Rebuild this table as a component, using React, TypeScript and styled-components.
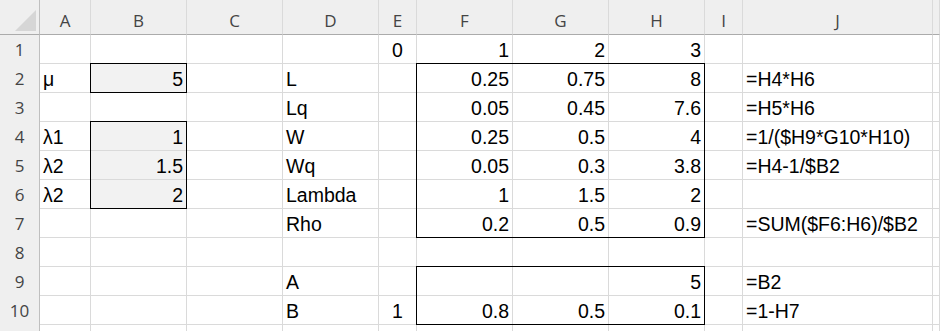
import styled, { createGlobalStyle } from 'styled-components';

type Value = string | number | null;
type Align = 'left' | 'right' | 'center';

interface CellProps {
  $align: Align;
  $fill?: boolean;
}

interface BoxProps {
  $cols: string;
  $rows: string;
}

const COL_WIDTHS = [40, 51, 96, 96, 96, 38, 96, 96, 96, 38, 190];
const TEMPLATE_COLS = `${COL_WIDTHS.map(w => `${w}px`).join(' ')} 1fr`;
const TEMPLATE_ROWS = '35px repeat(11, 29px)';
const LETTERS = ['A', 'B', 'C', 'D', 'E', 'F', 'G', 'H', 'I', 'J', 'K'];

// A..K for rows 1..10, plus the top of row 11 peeking in at the bottom
const DATA: Value[][] = [
  [null, null, null, null, 0, 1, 2, 3, null, null, null],
  ['μ', 5, null, 'L', null, 0.25, 0.75, 8, null, '=H4*H6', null],
  [null, null, null, 'Lq', null, 0.05, 0.45, 7.6, null, '=H5*H6', null],
  ['λ1', 1, null, 'W', null, 0.25, 0.5, 4, null, '=1/($H9*G10*H10)', null],
  ['λ2', 1.5, null, 'Wq', null, 0.05, 0.3, 3.8, null, '=H4-1/$B2', null],
  ['λ2', 2, null, 'Lambda', null, 1, 1.5, 2, null, null, null],
  [null, null, null, 'Rho', null, 0.2, 0.5, 0.9, null, '=SUM($F6:H6)/$B2', null],
  [null, null, null, null, null, null, null, null, null, null, null],
  [null, null, null, 'A', null, null, null, 5, null, '=B2', null],
  [null, null, null, 'B', 1, 0.8, 0.5, 0.1, null, '=1-H7', null],
  [null, null, null, null, null, null, null, null, null, null, null],
];

// shaded input cells (row, col index)
const SHADED = ['2-1', '4-1', '5-1', '6-1'];

// column E is centred
const CENTERED_COL = 4;

// outlined ranges, in grid lines (col 1 / row 1 are the headers)
const BOXES = [
  { cols: '3 / 4', rows: '3 / 4' },
  { cols: '3 / 4', rows: '5 / 8' },
  { cols: '7 / 10', rows: '3 / 9' },
  { cols: '7 / 10', rows: '10 / 12' },
];

const GlobalStyle = createGlobalStyle`
  * {
    box-sizing: border-box;
  }
  html, body {
    margin: 0;
    padding: 0;
    background: #ffffff;
    overflow: hidden;
  }
`;

const Sheet = styled.div`
  display: grid;
  width: 940px;
  height: 331px;
  overflow: hidden;

  > * {
    grid-area: 1 / 1;
  }
`;

const Grid = styled.div`
  display: grid;
  grid-template-columns: ${TEMPLATE_COLS};
  grid-template-rows: ${TEMPLATE_ROWS};
  font-family: 'Liberation Sans', Arial, sans-serif;
`;

const Overlay = styled.div`
  display: grid;
  grid-template-columns: ${TEMPLATE_COLS};
  grid-template-rows: ${TEMPLATE_ROWS};
  pointer-events: none;
`;

const RangeBox = styled.div<BoxProps>`
  grid-column: ${p => p.$cols};
  grid-row: ${p => p.$rows};
  margin: -1px 0 0 -1px;
  border: 1px solid #000000;
`;

const Corner = styled.div`
  background: #efefef;
  border-right: 1px solid #bfbfbf;
  border-bottom: 1px solid #ababab;
  display: flex;
  align-items: flex-end;
  justify-content: flex-end;
  padding: 0 3px 3px 0;
`;

const ColHeader = styled.div`
  background: #efefef;
  border-right: 1px solid #dadada;
  border-bottom: 1px solid #ababab;
  display: flex;
  align-items: flex-end;
  justify-content: center;
  padding-bottom: 3px;
  font-family: 'Open Sans', 'Liberation Sans', sans-serif;
  font-size: 17px;
  line-height: 20px;
  color: #444444;
  overflow: hidden;
`;

const RowHeader = styled.div`
  background: #efefef;
  border-right: 1px solid #bfbfbf;
  display: flex;
  align-items: center;
  justify-content: center;
  font-family: 'Open Sans', 'Liberation Sans', sans-serif;
  font-size: 17px;
  line-height: 20px;
  color: #444444;
`;

const justify = { left: 'flex-start', right: 'flex-end', center: 'center' };

const Cell = styled.div<CellProps>`
  display: flex;
  align-items: flex-end;
  justify-content: ${p => justify[p.$align]};
  padding: 0 3px 3px;
  background: ${p => (p.$fill ? '#f2f2f2' : '#ffffff')};
  border-right: 1px solid #dadada;
  border-bottom: 1px solid #dadada;
  font-size: 19.5px;
  line-height: 20px;
  color: #000000;
  white-space: nowrap;
  min-width: 0;
`;

const CornerMark = () => (
  <svg width="21" height="21" viewBox="0 0 21 21">
    <polygon points="21,0 21,21 0,21" fill="#d6d6d6" />
  </svg>
);

const alignOf = (v: Value, c: number): Align => {
  if (c === CENTERED_COL) return 'center';
  return typeof v === 'number' ? 'right' : 'left';
};

const App = () => {
  return (
    <>
      <GlobalStyle />
      <Sheet>
        <Grid>
          <Corner>
            <CornerMark />
          </Corner>
          {LETTERS.map(l => (
            <ColHeader key={l}>{l === 'K' ? '' : l}</ColHeader>
          ))}
          {DATA.map((row, r) => [
            <RowHeader key={`h${r}`}>{r < 10 ? r + 1 : ''}</RowHeader>,
            ...row.map((v, c) => (
              <Cell
                key={`${r}-${c}`}
                $align={alignOf(v, c)}
                $fill={SHADED.includes(`${r + 1}-${c}`)}
              >
                {v}
              </Cell>
            )),
          ])}
        </Grid>
        <Overlay>
          {BOXES.map((b, i) => (
            <RangeBox key={i} $cols={b.cols} $rows={b.rows} />
          ))}
        </Overlay>
      </Sheet>
    </>
  );
};

export default App;
